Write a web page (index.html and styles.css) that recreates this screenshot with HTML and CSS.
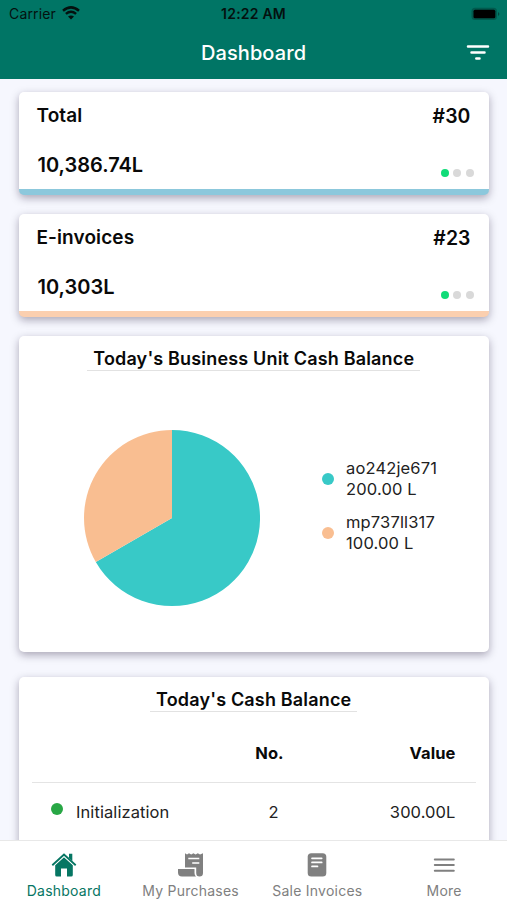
FILE: index.html
```html
<!DOCTYPE html>
<html lang="en">
<head>
<meta charset="utf-8">
<title>Dashboard</title>
<link rel="stylesheet" href="styles.css">
</head>
<body>
<div class="app">
  <header class="header">
    <div class="status">
      <div class="carrier"><span>Carrier</span>
        <svg width="18" height="14" viewBox="0 0 18 14" fill="none" stroke="#04110f" stroke-width="2.5"><path d="M1 4.8Q9-2 17 4.8M3.9 7.9Q9 3.6 14.1 7.9"/><path d="M9 13.6 6 10.6Q9 8.2 12 10.6Z" fill="#04110f" stroke="none"/></svg>
      </div>
      <span class="time">12:22 AM</span>
      <svg class="battery" width="30" height="14" viewBox="0 0 30 14"><rect x=".5" y=".8" width="25.5" height="12.2" rx="3.5" fill="#005a4e"/><rect x="2.5" y="2.8" width="21.8" height="8.4" rx="1.5" fill="#000"/><path d="M27 5Q29.8 7 27 9Z" fill="#00493f"/></svg>
    </div>
    <div class="bar">
      <h1>Dashboard</h1>
      <svg class="filter" width="24" height="18" viewBox="0 0 24 18" stroke="#fff" stroke-width="2.5" stroke-linecap="round"><path d="M2 2.5H22M5.5 8.5H18.5M10.3 14.5H13.5"/></svg>
    </div>
  </header>
  <main class="content">
    <section class="card stat blue">
      <div class="row"><span class="name">Total</span><span class="count">#30</span></div>
      <div class="row bottom"><span class="amount">10,386.74L</span><span class="dots"><i class="on"></i><i></i><i></i></span></div>
    </section>
    <section class="card stat peach">
      <div class="row"><span class="name">E-invoices</span><span class="count">#23</span></div>
      <div class="row bottom"><span class="amount">10,303L</span><span class="dots"><i class="on"></i><i></i><i></i></span></div>
    </section>
    <section class="card units">
      <h2><span>Today's Business Unit Cash Balance</span></h2>
      <div class="chart">
        <svg width="176" height="176" viewBox="-88 -88 176 176"><path d="M0 0V-88A88 88 0 1 1-76.2 44Z" fill="#38c9c7"/><path d="M0 0V-88A88 88 0 0 0-76.2 44Z" fill="#f9be91"/></svg>
        <ul class="legend">
          <li><i class="teal"></i><div>ao242je671<br>200.00 L</div></li>
          <li><i class="orange"></i><div>mp737ll317<br>100.00 L</div></li>
        </ul>
      </div>
    </section>
    <section class="card cash">
      <h2><span>Today's Cash Balance</span></h2>
      <div class="table">
        <div class="tr th"><span></span><span class="no">No.</span><span class="val">Value</span></div>
        <div class="tr"><span class="label"><i></i><span>Initialization</span></span><span class="no two">2</span><span class="val">300.00L</span></div>
      </div>
    </section>
  </main>
  <nav class="nav">
    <a class="active">
      <svg width="28" height="26" viewBox="0 0 28 26"><path d="M14 5.2 22.8 13.2V23Q22.8 24.6 21.2 24.6H17V16.4H11V24.6H6.8Q5.2 24.6 5.2 23V13.2Z" fill="#067663"/><path d="M1.6 13.6 14 2.4 26.4 13.6" fill="none" stroke="#fff" stroke-width="3.6"/><path d="M19 1.7H22.3V9L19 6Z" fill="#067663"/><path d="M2.3 13.2 14 2.5 25.7 13.2" fill="none" stroke="#067663" stroke-width="1.9"/></svg>
      <span>Dashboard</span>
    </a>
    <a>
      <svg width="28" height="26" viewBox="0 0 28 26"><path d="M8 1.2 10 2.4 12 1.2 14.2 2.4 16.4 1.2 18.6 2.4 20.8 1.2 23 2.4 26 1.2V21Q26 24.6 22.5 24.6Q19.2 24.6 19.2 21V15.4H8Z" fill="#808080"/><path d="M1 17H17.5V21Q17.5 23.5 19 24.6H5Q1 24.6 1 20.5Z" fill="#808080"/><path d="M11.3 6.5H22.3M15.2 11H22.3" stroke="#fff" stroke-width="1.6"/></svg>
      <span>My Purchases</span>
    </a>
    <a>
      <svg width="28" height="26" viewBox="0 0 28 26"><rect x="4.7" y="1.2" width="18.6" height="23.4" rx="3.6" fill="#808080"/><path d="M9 6.3H18.7M9 10.4H18.7M9 14.4H14.5" stroke="#fff" stroke-width="1.7" stroke-linecap="round"/></svg>
      <span>Sale Invoices</span>
    </a>
    <a>
      <svg width="28" height="26" viewBox="0 0 28 26" stroke="#808080" stroke-width="2" stroke-linecap="round"><path d="M4.8 7.4H23.8M4.8 13.1H23.8M4.8 18.8H23.8"/></svg>
      <span>More</span>
    </a>
  </nav>
</div>
</body>
</html>
```

FILE: styles.css
```css
* { box-sizing: border-box; }
body { margin: 0; font-family: Inter, "Liberation Sans", sans-serif; color: #090909; background: #f6f7fe; }
h1, h2, ul { margin: 0; padding: 0; }
ul { list-style: none; }
svg { display: block; flex: none; }
.app { height: 900px; display: flex; flex-direction: column; overflow: hidden; }
.header { flex: none; height: 79px; background: #007565; }
.status { height: 27px; display: grid; grid-template-columns: 1fr auto 1fr; align-items: center; padding: 0 6px 0 9px; font-size: 14px; line-height: 18px; color: #04110f; }
.carrier { display: flex; align-items: center; gap: 6px; letter-spacing: .15px; }
.carrier svg { margin-top: -2px; }
.time { font-weight: 600; letter-spacing: .2px; margin-left: -3px; }
.battery { justify-self: end; }
.bar { height: 52px; display: grid; grid-template-columns: 1fr auto 1fr; align-items: center; padding: 0 17px; color: #fff; }
.bar h1 { grid-column: 2; font-size: 20px; line-height: 26px; font-weight: 500; letter-spacing: .1px; }
.filter { justify-self: end; }
.content { flex: 1; min-height: 0; overflow: hidden; padding: 12.5px 18.5px 0 19px; display: flex; flex-direction: column; }
.card { flex: none; background: #fff; border-radius: 5px; box-shadow: 0 3px 9px rgba(20, 10, 40, .34); }
.stat { height: 103.5px; margin-bottom: 18.5px; padding: 11px 18px 0 17.5px; border-bottom: 6px solid #8cc8dc; font-size: 19px; line-height: 26px; font-weight: 600; letter-spacing: .1px; }
.count { font-size: 19.4px; }
.amount { font-size: 20px; line-height: 27px; letter-spacing: 0; }
.peach { border-bottom-color: #fbcfaf; }
.row { display: flex; justify-content: space-between; }
.bottom { margin-top: 23px; padding-left: 1px; }
.dots { display: flex; gap: 4.5px; margin: 17px -3px 0 0; }
.dots i { width: 8px; height: 8px; border-radius: 50%; background: #d9d9d9; }
.dots .on { background: #10dc78; }
h2 { display: flex; justify-content: center; font-size: 18px; line-height: 23px; font-weight: 600; letter-spacing: .17px; }
h2 span { padding: 0 6px; border-bottom: 1.5px solid #e2e2e2; white-space: nowrap; }
.units { height: 316.5px; margin-bottom: 24.5px; padding-top: 11px; }
.chart { display: flex; padding: 59px 0 0 64.5px; }
.legend { margin: 28px 0 0 62px; font-size: 16.5px; line-height: 21px; letter-spacing: .15px; color: #222; }
.legend li { display: flex; align-items: center; gap: 12.5px; margin-bottom: 12px; }
.legend i { width: 12px; height: 12px; border-radius: 50%; }
.teal { background: #38c9c7; }
.orange { background: #f9be91; }
.cash { height: 220px; padding-top: 11px; }
.table { padding: 13px 13px 0; font-size: 16.5px; line-height: 22px; letter-spacing: .08px; }
.tr { display: grid; grid-template-columns: 206px 70px 1fr; height: 58px; align-items: center; padding-right: 20px; color: #222; }
.th { border-bottom: 1px solid #e4e4e4; font-weight: 700; color: #090909; }
.no { text-align: center; }
.th .no { padding-right: 7px; }
.two { padding-left: 1px; }
.val { text-align: right; }
.label { display: flex; align-items: center; padding-left: 19px; gap: 13px; }
.label i { width: 12px; height: 12px; border-radius: 50%; background: #28a745; margin-top: -6px; }
.nav { flex: none; height: 60px; display: grid; grid-template-columns: repeat(4, 1fr); border-top: 1px solid #e8e8e8; background: #fff; color: #808080; font-size: 14px; line-height: 18px; letter-spacing: .24px; }
.nav a { display: flex; flex-direction: column; align-items: center; padding: 11px 0 0 1px; gap: 4px; }
.nav .active { color: #067663; }
```
